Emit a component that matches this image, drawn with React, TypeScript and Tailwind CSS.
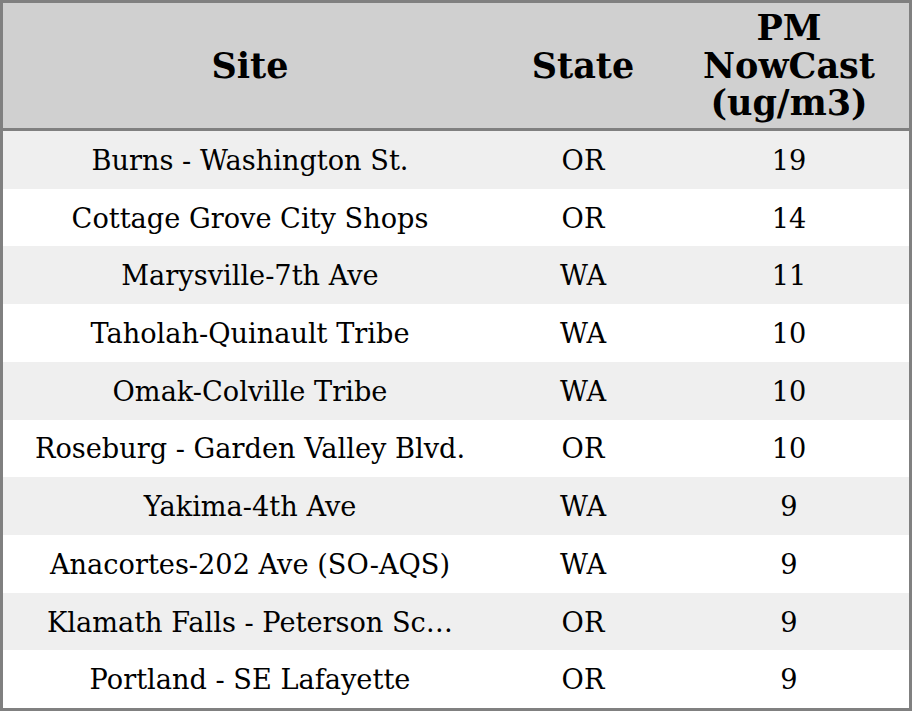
import React from "react";

const rows: [string, string, string][] = [
  ["Burns - Washington St.", "OR", "19"],
  ["Cottage Grove City Shops", "OR", "14"],
  ["Marysville-7th Ave", "WA", "11"],
  ["Taholah-Quinault Tribe", "WA", "10"],
  ["Omak-Colville Tribe", "WA", "10"],
  ["Roseburg - Garden Valley Blvd.", "OR", "10"],
  ["Yakima-4th Ave", "WA", "9"],
  ["Anacortes-202 Ave (SO-AQS)", "WA", "9"],
  ["Klamath Falls - Peterson Sc…", "OR", "9"],
  ["Portland - SE Lafayette", "OR", "9"],
];

export default function App() {
  return (
    <div
      className="w-[912px] h-[711px] border-[3px] border-[#808080] flex flex-col text-black"
      style={{ fontFamily: '"DejaVu Serif", serif' }}
    >
      <div className="h-[125px] shrink-0 bg-[#d0d0d0] border-b-[3px] border-[#808080] box-content grid grid-cols-[494px_172px_240px] items-center text-center font-bold text-[35px] leading-[37.5px]">
        <div>Site</div>
        <div>State</div>
        <div>
          PM
          <br />
          NowCast
          <br />
          (ug/m3)
        </div>
      </div>
      <div className="flex-1 flex flex-col">
        {rows.map((r, i) => (
          <div
            key={i}
            className={`flex-1 grid grid-cols-[494px_172px_240px] items-center text-center text-[27.2px] pt-[3px] ${
              i % 2 === 0 ? "bg-[#efefef]" : "bg-white"
            }`}
          >
            <div className="whitespace-nowrap">{r[0]}</div>
            <div>{r[1]}</div>
            <div>{r[2]}</div>
          </div>
        ))}
      </div>
    </div>
  );
}
